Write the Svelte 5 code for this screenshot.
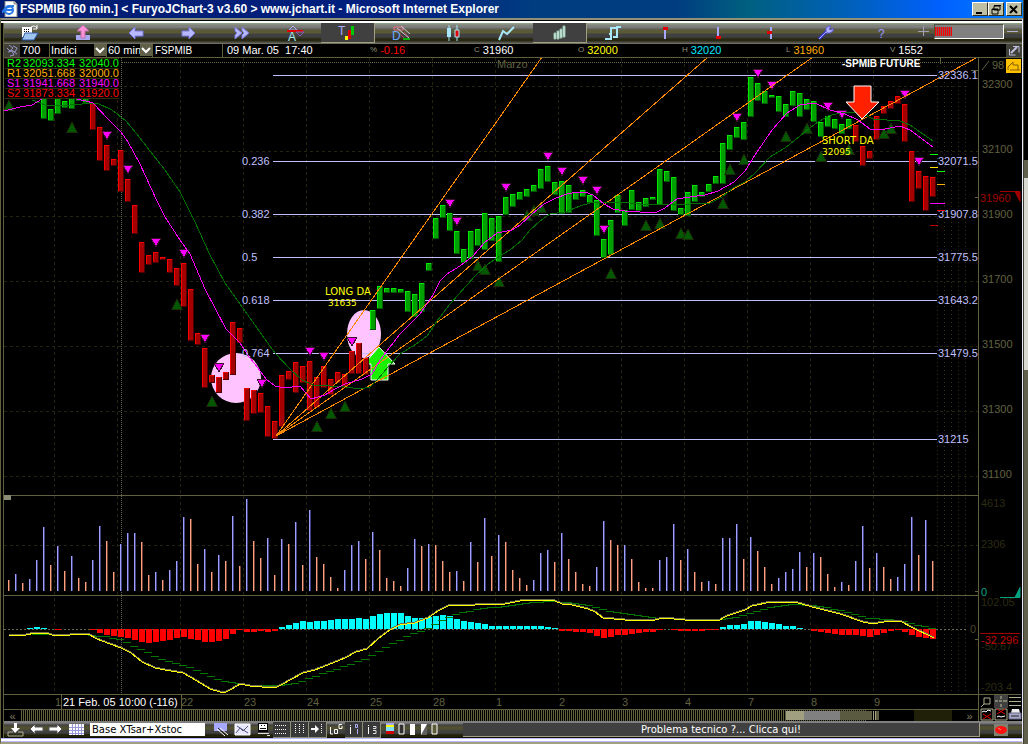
<script lang="ts">
  type Shape = { d?: string; fill?: string; stroke?: string; w?: number; t?: string; x?: number; y?: number }
  type Icon = { label: string; shapes: Shape[]; on?: boolean; size?: number }

  const LILAC = '#a8a8ff'
  const SKY = '#a8e8f8'

  const tools: Icon[] = [
    { label: 'Apri', shapes: [
      { d: 'M2 3h10v10H2z', fill: '#fff' },
      { d: 'M4 5h1v1H4zM6 5h1v1H6zM8 5h1v1H8zM4 7h1v1H4zM6 7h1v1H6zM8 7h1v1H8z', fill: '#000' },
      { d: 'M5 9h13l-4 7H2z', fill: '#9ec4f0', stroke: '#3058a8' },
      { d: 'M10 4q4-4 7 0M17 1v4h-4', stroke: '#fff' }
    ] },
    { label: 'Carica', shapes: [
      { d: 'M3 11h14v5H3z', fill: '#a8a8f0' },
      { d: 'M10 1l6 6h-4v7H8V7H4z', fill: '#ff90d8', stroke: '#b870a8' }
    ] },
    { label: 'Indietro', shapes: [{ d: 'M3 9l6-6v4h8v5H9v3z', fill: '#b8b8ff', stroke: '#7878e0' }] },
    { label: 'Avanti', shapes: [{ d: 'M16 9l-6-6v4H3v5h7v3z', fill: '#b8b8ff', stroke: '#7878e0' }] },
    { label: 'Fine', shapes: [{ d: 'M3 3l7 6-7 6V11l2-2-2-2zM10 3l7 6-7 6V11l2-2-2-2z', fill: '#b8b8ff', stroke: '#7878e0' }] },
    { label: 'Allarmi', shapes: [
      { d: 'M4 6l4-4 4 4z', stroke: LILAC },
      { d: 'M2 7h16', stroke: '#e00000', w: 2 },
      { d: 'M11 8h8l-4 4z', stroke: '#8858b8' },
      { t: 'A', x: 3, y: 17, fill: SKY }
    ] },
    { label: 'Testo', on: true, shapes: [
      { t: 'T', x: 1, y: 11, fill: LILAC },
      { d: 'M8 12h3v4H8z', fill: '#ff0' },
      { d: 'M11 6h3v9h-3z', fill: '#e00000' },
      { d: 'M14 2h3v9h-3z', fill: '#00c800' }
    ] },
    { label: 'Disegno', shapes: [
      { d: 'M3 3h9v3H3z', stroke: '#e87080' },
      { d: 'M6 4l12 10M10 2l9 8', stroke: '#c8c8d8' },
      { d: 'M8 9l5 5M13 8l5 5', stroke: '#b04060' },
      { d: 'M12 15h7', stroke: '#00b000', w: 2 },
      { t: 'D', x: 1, y: 16, fill: '#68a8ff' }
    ] },
    { label: 'Candele', shapes: [
      { d: 'M5 1v16M13 1v16', stroke: SKY },
      { d: 'M3 4h4v9H3z', fill: SKY },
      { d: 'M11 6h4v7h-4z', fill: '#e00000', stroke: SKY }
    ] },
    { label: 'Linea', shapes: [{ d: 'M2 16l4-9 4 3 7-7', stroke: SKY, w: 2 }] },
    { label: 'Barre', on: true, shapes: [
      { d: 'M4 9h2v6H4zM7 7h2v8H7zM10 5h2v9h-2zM13 2h2v11h-2z', fill: '#e0fff0', stroke: '#90b8a8' }
    ] },
    { label: 'Gradini', shapes: [{ d: 'M1 15h6v-5H5M7 10V4h5M9 13h4V8h-1M13 8V3h4', stroke: SKY, w: 2 }] },
    { label: 'Marca alto', shapes: [{ d: 'M9 5v10', stroke: LILAC, w: 2 }, { d: 'M7 3h5v3H7z', fill: '#e00000' }] },
    { label: 'Marca basso', shapes: [{ d: 'M9 3v9', stroke: LILAC, w: 2 }, { d: 'M7 12h5v3H7z', fill: '#e00000' }] },
    { label: 'Marca medio', shapes: [{ d: 'M9 3v12', stroke: LILAC, w: 2 }, { d: 'M5 7h5v3H5z', fill: '#e00000' }] },
    { label: 'Opzioni', shapes: [
      { d: 'M4 15l8-8', stroke: '#3838c8', w: 3 },
      { d: 'M4 15l8-8', stroke: '#b0b0ff' },
      { d: 'M11 8V4l3-2h2l-2 3 2 1 2-2v3l-3 2h-4', fill: '#b0b0ff', stroke: '#5858d0' }
    ] },
    { label: 'Aiuto', shapes: [{ t: '?', x: 10, y: 14, fill: '#9898ff' }] }
  ]

  const panelTools: Icon[] = [
    { label: 'Lente', shapes: [{ d: 'M4 3h6v6H4zM4 9l-3 3', stroke: '#b0b090' }] },
    { label: 'Mirino', on: true, shapes: [{ d: 'M7 1v3M7 5v2M7 9v3M1 6h3M5 6h1M9 6h4', stroke: '#c0c0a0' }] },
    { label: 'Righe', shapes: [{ d: 'M1 2.5h12M1 6.5h12M1 10.5h12', stroke: '#b0b090' }] },
    { label: 'Togli sotto', shapes: [{ d: 'M1 1h12v11H1z', stroke: '#b0b090' }, { d: 'M2 4l2-1 2 1 2-2 3 1', stroke: '#fff' }, { d: 'M3 6l8 5M11 6l-8 5', stroke: '#e00000' }] },
    { label: 'Togli sopra', shapes: [{ d: 'M1 1h12v11H1z', stroke: '#b0b090' }, { d: 'M3 1l8 5M11 1l-8 5', stroke: '#e00000' }, { d: 'M3 9l2-1 2 1 4-1', stroke: '#fff' }] },
    { label: 'Stampa', shapes: [{ d: 'M4 1h7l1 4H3z', fill: '#eee' }, { d: 'M1 5h12v6H1z', fill: '#a8a8c8', stroke: '#686888' }, { d: 'M3 8h8', stroke: '#222' }] }
  ]

  const bottomLeft: Icon[] = [
    { label: 'Salva', size: 22, shapes: [{ d: 'M7 1h3v5h3l-5 5-4-5h3z', fill: '#fff' }, { d: 'M1 10h5M11 10h5v4H1v-4', stroke: '#b0b090' }] },
    { label: 'Precedente', size: 20, shapes: [{ d: 'M2 7l5-5v3h8v4H7v3z', fill: '#fff', stroke: '#505050' }] },
    { label: 'Successivo', size: 19, shapes: [{ d: 'M15 7l-5-5v3H2v4h8v3z', fill: '#fff', stroke: '#505050' }] },
    { label: 'Griglia', size: 22, shapes: [{ d: 'M1 2h15v11H1z', fill: '#fff' }, { d: 'M1 5.5h15M1 8.5h15M1 11.5h15M4.5 2v11M7.5 2v11M10.5 2v11M13.5 2v11', stroke: '#9898d8' }] }
  ]
  const bottomMid: Icon[] = [
    { label: 'Modello', size: 22, shapes: [{ d: 'M2 1h13v8H2z', fill: '#a8a8ff' }, { d: 'M5 7l8 7M8 6l8 7', stroke: '#fff' }, { d: 'M6 6l8 7', stroke: '#222' }] },
    { label: 'Immagine', size: 22, shapes: [{ d: 'M1 2h15v11H1z', fill: '#e8e8ff', stroke: '#fff' }, { d: 'M2 11l4-5 3 3 5-5M3 4l11 7', stroke: '#555580' }] },
    { label: 'Monitor', size: 20, shapes: [{ d: 'M3 1h10v9H3z', fill: '#000' }, { d: 'M4 2h8v6H4z', fill: '#fff' }, { d: 'M6 3.5h1M9 3.5h1M5 6.5h6', stroke: '#111' }, { d: 'M3 11.5h11M12 13.5h3', stroke: '#ddd' }] },
    { label: 'Righe orizzontali', on: true, size: 18, shapes: [{ d: 'M2 3h1v1H2zM4 3h1v1H4zM6 3h1v1H6zM8 3h1v1H8zM10 3h1v1h-1zM12 3h1v1h-1zM2 7h1v1H2zM4 7h1v1H4zM6 7h1v1H6zM8 7h1v1H8zM10 7h1v1h-1zM12 7h1v1h-1zM2 11h1v1H2zM4 11h1v1H4zM6 11h1v1H6zM8 11h1v1H8zM10 11h1v1h-1zM12 11h1v1h-1z', fill: '#fff' }] },
    { label: 'Righe verticali', on: true, size: 18, shapes: [{ d: 'M4.5 2v1M4.5 4v1M4.5 6v1M4.5 8v1M4.5 10v1M8.5 2v1M8.5 4v1M8.5 6v1M8.5 8v1M8.5 10v1M12.5 2v1M12.5 4v1M12.5 6v1M12.5 8v1M12.5 10v1', stroke: '#fff' }] },
    { label: 'Sposta', on: true, size: 18, shapes: [{ d: 'M2 6h4V3l4 4-4 4V8H2z', fill: '#fff' }, { d: 'M12.5 2v1M12.5 4v1M12.5 6v1M12.5 8v1M12.5 10v1', stroke: '#fff' }] },
    { label: 'Log', size: 18, shapes: [{ d: 'M2.5 5v7H5M6.5 7.5h3v4h-3zM14 2.5h-3v4h3V4', stroke: '#fff' }] },
    { label: 'Info uno', on: true, size: 18, shapes: [{ d: 'M5.5 3v1M5.5 5v7', stroke: '#fff' }, { d: 'M10.5 2.5h2v3h-2zM12.5 7v5', stroke: '#b0b0ff' }] },
    { label: 'Info due', on: true, size: 18, shapes: [{ d: 'M5.5 3v1M5.5 5v7', stroke: '#fff' }, { d: 'M10 4.5h3v2h-3M10 8.5h3v3h-3', stroke: '#e0e0e0' }] },
    { label: 'Colori', size: 15, shapes: [{ d: 'M6 1h8v2H6z', fill: '#a8a8ff' }, { d: 'M6 3h8v2H6z', fill: '#ff0' }, { d: 'M6 5h8v4H6z', fill: '#7fdfff' }, { d: 'M6 9h8v3H6z', fill: '#d00000' }] },
    { label: 'Vuoto', size: 11, shapes: [{ d: 'M6 2h5v10H6z', fill: '#303030', stroke: '#fff' }] },
    { label: 'Pieno', size: 11, shapes: [{ d: 'M6 2h5v11H6z', fill: '#fff' }] },
    { label: 'Mezzo', size: 11, shapes: [{ d: 'M6 2h6v11H6z', fill: '#606060' }, { d: 'M6 2h6l-6 11z', fill: '#fff' }] },
    { label: 'Oliva', size: 11, shapes: [{ d: 'M6 2h5v10H6z', fill: '#5a5a38', stroke: '#fff' }] }
  ]

  const quotes = [
    ['%', '-0.16', 'red'],
    ['C', '31960', 'white'],
    ['O', '32000', 'yellow'],
    ['H', '32020', 'cyan'],
    ['L', '31960', 'orange'],
    ['V', '1552', 'white']
  ]

  const pivots = [
    ['R2', '32093.334', '32040.0', 'green'],
    ['R1', '32051.668', '32000.0', 'orange'],
    ['S1', '31941.668', '31940.0', 'magenta'],
    ['S2', '31873.334', '31920.0', 'red']
  ]

  const STEP = 7
  const barX = (i: number) => 6 + STEP * i

  // top and bottom of each bar, the first one sits on slot 5
  const FIRST = 5
  const candles = [
    [98, 119], [109, 121], [98, 114], [101, 108], [98, 109], [98, 101], [98, 103], [103, 130], [127, 161], [145, 171],
    [159, 166], [150, 192], [179, 202], [205, 234], [242, 273], [255, 265], [252, 263], [257, 260], [259, 273], [268, 286],
    [263, 307], [289, 341], [333, 345], [348, 388], [375, 383], [377, 393], [372, 380], [322, 375], [328, 343], [388, 421],
    [390, 414], [393, 413], [406, 437], [421, 439], [375, 427], [371, 380], [362, 393], [366, 383], [361, 411], [377, 408],
    [366, 388], [379, 395], [372, 383], [374, 388], [351, 374], [343, 374], [358, 375], [310, 330], [286, 309], [288, 293],
    [288, 293], [289, 293], [291, 312], [294, 317], [283, 312], [263, 271], [218, 239], [205, 218], [213, 231], [231, 254],
    [249, 263], [231, 259], [229, 246], [213, 250], [218, 241], [216, 262], [197, 215], [194, 207], [192, 200], [189, 197],
    [185, 192], [169, 189], [166, 182], [182, 195], [181, 214], [185, 213], [192, 200], [190, 197], [195, 203], [200, 236],
    [239, 258], [220, 255], [195, 213], [210, 226], [190, 210], [202, 211], [198, 207], [197, 200], [169, 205], [171, 182],
    [177, 211], [208, 215], [192, 216], [185, 202], [192, 197], [184, 192], [176, 184], [143, 184], [135, 150], [127, 138],
    [122, 140], [77, 117], [83, 101], [91, 104], [95, 98], [96, 112], [104, 117], [91, 106], [93, 117], [99, 110],
    [101, 122], [122, 137], [116, 127], [119, 129], [124, 134], [119, 129], [125, 142], [146, 166], [151, 159], [116, 140],
    [106, 114], [101, 109], [96, 104], [104, 142], [151, 202], [171, 189], [176, 211], [177, 197]
  ].map(([top, bottom], n) => {
    const i = n + FIRST
    return { x: barX(i), top, h: bottom - top, up: i < 12 || (i > 51 && i < 121) }
  })

  // negative values are the falling bars
  const volumes = [
    -11, 17, -8, 12, 31, 64, -26, 45, -20, 35, -13, -9, 31, 65, -50, -19, 47, 58, 58, -49,
    -16, 19, -11, 21, 30, 74, -72, -27, 42, -19, 36, -30, 75, -25, 92, -50, -33, 53, -16, 52,
    -47, 69, -26, 81, -34, -27, -14, -3, 21, 46, 50, -32, 59, -41, -13, -10, -5, 23, 52, -45,
    47, -46, -30, -19, 20, -10, 49, -29, 73, -35, 56, -49, -21, -13, -6, 11, 38, 41, -29, 58,
    -32, -19, -7, -5, 24, 70, -51, -46, 46, -32, -9, -3, -3, 31, 34, 67, -31, 42, -19, -9,
    10, -7, 53, 53, 67, -32, 54, -40, -24, -7, 13, 19, 22, 39, -24, 38, -34, -17, -4, 9,
    -6, 30, 65, -23, 38, -24, -12, 14, 27, 74, -36, 71, -30
  ]

  const histogram = [
    0, 0, 0, 1, 2, 1, 0, -1, 0, 0, 0, 0, -1, -4, -6, -7, -8, -9, -11, -13,
    -14, -13, -12, -11, -9, -8, -10, -11, -13, -13, -12, -10, -5, -1, -3, -3, -2, -3, -2, 2,
    4, 6, 8, 7, 8, 8, 9, 10, 10, 10, 11, 10, 13, 15, 16, 16, 16, 13, 11, 11,
    12, 13, 14, 13, 10, 8, 7, 6, 5, 3, 3, 3, 3, 3, 3, 3, 3, 2, 1, -2,
    -2, -3, -3, -4, -7, -9, -8, -6, -6, -5, -4, -3, -3, -1, 0, -1, -2, -2, -2, -2,
    -1, -1, 2, 4, 4, 5, 8, 8, 7, 6, 5, 3, 3, 1, 0, -2, -3, -4, -5, -6,
    -6, -6, -7, -8, -6, -4, -2, -1, -3, -6, -8, -9, -10
  ]

  const fastAvg = '4,111 20,107 32,105 42,99 72,98 86,101 93,103 108,119 121,132 128,142 140,164 157,201 165,217 180,240 190,254 205,289 215,308 226,329 240,343 250,358 258,368 266,379 275,386 285,388 300,386 311,399 325,395 333,390 345,384 362,379 372,374 380,360 400,334 420,314 433,295 440,281 447,274 460,266 473,256 484,243 497,233 512,230 520,225 532,214 544,204 556,198 567,194 577,192 585,192 593,195 604,204 613,209 625,211 655,213 665,208 677,199 690,197 705,195 718,191 734,182 745,171 755,155 772,130 787,113 800,105 815,103 830,110 845,114 858,120 870,129 880,130 900,126 910,130 933,147'
  const slowAvg = '32,100 45,105 70,105 82,104 97,103 112,110 126,121 136,133 150,151 165,170 180,192 195,222 210,255 225,283 240,304 262,335 275,353 290,369 302,380 313,385 330,386 345,387 360,389 370,387 378,379 388,367 400,354 416,344 427,336 437,321 450,304 475,276 488,264 500,256 510,250 522,240 530,230 540,221 550,214 565,212 580,206 590,203 620,202 640,204 690,204 710,203 722,197 733,188 745,182 755,173 770,157 785,148 800,136 815,124 828,116 840,113 860,112 873,119 900,121 910,125 933,141'
  const macd = '9,636 26,635 35,633 46,633 52,635 70,635 88,634 97,639 110,644 121,648 131,653 142,662 155,668 165,670 183,673 190,677 202,684 210,689 220,692 226,692 232,689 240,684 250,686 262,687 275,688 281,685 292,679 303,673 315,670 328,665 345,658 356,652 367,649 378,639 390,630 400,625 415,623 428,618 438,611 450,605 465,606 485,604 505,604 520,601 545,600 555,601 562,604 572,605 588,609 595,612 603,618 625,620 655,620 663,618 685,620 718,621 727,616 745,610 752,606 771,602 798,603 816,608 840,614 863,622 873,624 884,622 900,621 913,628 934,638'

  const signalPoints = [
    [35, 634], [80, 634], [95, 635], [110, 637], [121, 639], [131, 644], [145, 651], [160, 658], [180, 664], [195, 669],
    [215, 678], [225, 681], [240, 683], [250, 685], [275, 685], [290, 684], [304, 680], [320, 674], [345, 666], [362, 660],
    [376, 653], [390, 645], [405, 637], [420, 631], [432, 626], [445, 618], [460, 613], [480, 608], [505, 606], [525, 603],
    [550, 601], [570, 602], [585, 604], [600, 608], [615, 612], [635, 615], [660, 618], [690, 619], [720, 619], [735, 617],
    [750, 613], [770, 607], [795, 604], [815, 605], [830, 608], [850, 612], [870, 618], [900, 620], [915, 624], [934, 628]
  ]

  function signalAt(x: number) {
    const k = signalPoints.findIndex((p) => p[0] >= x)
    const [x1, y1] = signalPoints[k]
    const [x0, y0] = signalPoints[Math.max(0, k - 1)]
    return Math.round(x1 === x0 ? y1 : y0 + ((y1 - y0) * (x - x0)) / (x1 - x0))
  }

  const signal = volumes
    .map((_, i) => 8 + STEP * i)
    .filter((x) => x >= 36)
    .map((x) => `M${x - 4} ${signalAt(x)}h8`)
    .join('')

  const sellMarks = [
    [107, 131], [128, 165], [156, 238], [184, 249], [205, 334], [219, 363], [262, 379], [310, 347], [324, 352], [352, 337],
    [450, 199], [457, 217], [506, 183], [548, 152], [562, 167], [583, 176], [597, 186], [604, 225], [737, 113], [758, 69],
    [772, 81], [828, 102], [842, 110], [905, 90], [919, 157]
  ]
  const buyMarks = [
    [9, 100], [72, 122], [177, 299], [212, 396], [317, 421], [331, 408], [345, 401], [478, 260], [485, 264], [499, 276],
    [527, 210], [534, 205], [541, 202], [611, 268], [646, 220], [660, 218], [681, 228], [688, 229], [723, 198], [730, 164],
    [744, 154], [786, 131], [807, 123], [821, 151], [849, 144], [884, 128], [891, 123]
  ]

  const fibs = [
    [75, '', '32336.1'], [161, '0.236', '32071.5'], [214, '0.382', '31907.8'], [257, '0.5', '31775.5'],
    [300, '0.618', '31643.2'], [353, '0.764', '31479.5'], [439, '', '31215']
  ] as [number, string, string][]

  const fan = [[542, 57], [708, 57], [813, 57], [978, 57]]
  const scale = [32300, 32100, 31900, 31700, 31500, 31300, 31100]
  const gridX = Array.from({ length: 14 }, (_, n) => 54 + 63 * n)
  const futureX = [937, 944, 951, 958, 965]
  const days = ['1', '', '22', '23', '24', '25', '28', '1', '2', '3', '4', '7', '8', '9']

  const levels = [
    [930, 8, 154, '#00ff00'], [930, 8, 167, '#ffe000'], [937, 8, 171, '#00ff00'], [937, 8, 184, '#ffb000'],
    [930, 15, 203, '#ff00ff'], [937, 8, 210, '#ff0000'], [930, 8, 225, '#c00000']
  ] as [number, number, number, string][]

  let group = $state('Indici')
  let frame = $state('60 min')
  let template = $state('Base XTsar+Xstoc')
</script>

{#snippet glyph(shapes: Shape[], w: number, h: number)}
  <svg width={w} height={h} viewBox="0 0 {w} {h}" aria-hidden="true">
    {#each shapes as s}
      {#if s.t}
        <text class="glyph-text" x={s.x} y={s.y} fill={s.fill}>{s.t}</text>
      {:else}
        <path d={s.d} fill={s.fill ?? 'none'} stroke={s.stroke ?? 'none'} stroke-width={s.w ?? 1} />
      {/if}
    {/each}
  </svg>
{/snippet}

<div class="desktop">
  <main class="window">
    <header class="title">
      <svg width="16" height="16" viewBox="0 0 16 16" aria-hidden="true">
        <path d="M3 0h9l3 3v13H3z" fill="#fff" stroke="#888" />
        <path d="M12 0v3h3" fill="#ccc" stroke="#888" />
        <circle cx="7" cy="9" r="4" fill="none" stroke="#2878e8" stroke-width="2" />
        <path d="M4 9h7M0 12q3-7 12-7" fill="none" stroke="#2878e8" stroke-width="2" />
      </svg>
      <h1>FSPMIB [60 min.] &lt; FuryoJChart-3 v3.60 &gt; www.jchart.it - Microsoft Internet Explorer</h1>
      <button aria-label="Riduci a icona">{@render glyph([{ d: 'M2 8h6v2H2z', fill: '#000' }], 12, 11)}</button>
      <button aria-label="Ripristina">{@render glyph([{ d: 'M4 2h6v4H4zM2 5h6v5H2z', fill: '#bfbfa3', stroke: '#000' }, { d: 'M4 1h7v1H4zM2 5h6v1H2z', fill: '#000' }], 12, 11)}</button>
      <button class="close" aria-label="Chiudi">{@render glyph([{ d: 'M2 2l7 7M9 2L2 9', stroke: '#000', w: 2 }], 12, 11)}</button>
    </header>

    <div class="content">
      <nav class="toolbar">
        {#each tools as tool}
          <button class="tool" class:on={tool.on} aria-label={tool.label}>
            {@render glyph(tool.shapes, 20, 18)}
          </button>
        {/each}
        <button class="zoom" aria-label="Aumenta">{@render glyph([{ d: 'M7.5 2v10M2 7.5h11', stroke: '#a0a0b8' }], 14, 18)}</button>
        <input class="width" type="range" min="0" max="100" value="0" aria-label="Larghezza barre">
        <button class="zoom minus" aria-label="Riduci">{@render glyph([{ d: 'M1 7.5h11', stroke: '#b0b0d8' }], 14, 18)}</button>
      </nav>

      <div class="info">
        <button class="link" aria-label="Collega">
          {@render glyph([{ d: 'M4 1l4 3-3 3-3-3M8 2l4 2-2 4-4-2M3 8l4-1 2 4-4 1M9 8l3 2', stroke: '#9898c8' }], 15, 13)}
        </button>
        <span class="cell code">700</span>
        <span class="pick group">
          <select aria-label="Gruppo" bind:value={group}><option>Indici</option></select>
          <svg width="12" height="12" viewBox="0 0 12 12" aria-hidden="true"><path d="M0 0h12v12H0z" fill="#606048" /><path d="M2 4l4 4 4-4" fill="none" stroke="#fff" stroke-width="2" /></svg>
        </span>
        <span class="pick period">
          <select aria-label="Periodo" bind:value={frame}><option>60 min</option></select>
          <svg width="12" height="12" viewBox="0 0 12 12" aria-hidden="true"><path d="M0 0h12v12H0z" fill="#606048" /><path d="M2 4l4 4 4-4" fill="none" stroke="#fff" stroke-width="2" /></svg>
        </span>
        <span class="cell symbol">FSPMIB</span>
        <span class="date">09 Mar. 05 &nbsp;17:40</span>
        <div class="quotes">
          {#each quotes as [key, value, tone]}
            <span class="quote {tone}"><i>{key}</i>{value}</span>
          {/each}
        </div>
        <button class="link" aria-label="Ingrandisci">
          {@render glyph([{ d: 'M4 9l6-6M6 2.5h6v6M2.5 5v6h6', stroke: '#c0c0e0' }, { d: 'M4 9l6-6', stroke: '#c0c0e0', w: 2 }], 15, 13)}
        </button>
      </div>

      <section class="charts">
        <svg class="plot" viewBox="4 58 1018 637" role="img" aria-label="FSPMIB 60 min.">
          <g class="crisp">
            <g class="grid">
              {#each scale as _, n}
                <path d="M4 {86.5 + 65 * n}H{n ? 978 : 970}" />
              {/each}
              <path d="M4 545.5H978" />
              {#each gridX as x}
                <path d="M{x + 0.5} 58V692" />
              {/each}
              {#each futureX as x}
                <path class="dots" d="M{x + 0.5} 66V692" />
              {/each}
            </g>
            <path class="dotted" d="M122 62.5H970M121.5 58V695" />
            <path class="zero" d="M4 629.5H968" />
            <path class="rule" d="M4 495.5H978M4 595.5H978M4 694.5H1021M978.5 58V695M940.5 58v6M971 70.5h7M975 197.5h3M975 591.5h3M975 639.5h3" />
            <path d="M4 495h7v5H4z" fill="#8c8c74" />
          </g>

          <text class="month" x="497" y="68">Marzo</text>

          <ellipse cx="236" cy="378" rx="25" ry="25" fill="#ffc4ff" />
          <ellipse cx="364" cy="334" rx="17" ry="24" fill="#ffc4ff" />

          <g class="crisp fib">
            {#each fibs as [y]}
              <path d="M273 {y + 0.5}H937" />
            {/each}
          </g>

          <path class="arrow" d="M379 347l16 17h-7v16h-17v-16h-7z" fill="#18f000" />

          <g class="crisp">
            {#each candles as c}
              <rect x={c.x} y={c.top} width="6" height={c.h} fill={c.up ? '#005800' : '#500000'} />
              <rect x={c.x} y={c.top} width="5" height={c.h - 1} fill={c.up ? '#00e800' : '#ff0000'} />
              <rect x={c.x + 1} y={c.top + 1} width="4" height={Math.max(0, c.h - 2)} fill={c.up ? '#00a000' : '#a40000'} />
            {/each}
          </g>

          <g class="crisp marks">
            {#each buyMarks as [x, y]}
              <path class="buy" d="M{x} {y}l5 10h-10z" />
            {/each}
            {#each sellMarks as [x, y]}
              <path class="sell" d="M{x - 5} {y}h10l-5 9z" />
            {/each}
          </g>

          <g class="crisp lines">
            {#each fan as [x, y]}
              <path d="M276 436L{x} {y}" stroke="#ff8800" />
            {/each}
            <polyline points={slowAvg} stroke="#007000" />
            <polyline points={fastAvg} stroke="#ff00ff" />
          </g>

          <path class="arrow" d="M854 86h17v16h8l-17 17-16-17h8z" fill="#ff2000" />

          <g class="fib-text">
            {#each fibs as [y, ratio, price]}
              <text x="242" y={y + 4}>{ratio}</text>
              <text x="938" y={y + 4}>{price}</text>
            {/each}
          </g>

          <g class="note">
            <text x="325" y="295">LONG DA</text>
            <text class="num" x="328" y="306">31635</text>
            <text x="822" y="144">SHORT DA</text>
            <text class="num" x="822" y="155">32095</text>
          </g>
          <text class="future" x="842" y="67">-SPMIB FUTURE</text>

          <g class="crisp">
            {#each levels as [x, w, y, color]}
              <rect {x} {y} width={w} height="1" fill={color} />
            {/each}
            {#each volumes as v, i}
              <rect x={8 + STEP * i} y={591 - Math.abs(v)} width="2" height={Math.abs(v)} fill={v > 0 ? '#404080' : '#704030'} />
              <rect x={8 + STEP * i} y={591 - Math.abs(v)} width="1" height={Math.abs(v)} fill={v > 0 ? '#a0a0ff' : '#ffa080'} />
            {/each}
            {#each histogram as v, i}
              <rect x={barX(i)} y={v > 0 ? 629 - v : 629} width="6" height={Math.abs(v)} fill={v > 0 ? '#00ffff' : '#ff0000'} />
            {/each}
          </g>
          <g class="crisp lines">
            <path d={signal} stroke="#007800" />
            <polyline points={macd} stroke="#70704c" transform="translate(0 -1)" />
            <polyline points={macd} stroke="#ffff00" />
          </g>

          <g class="scale">
            {#each scale as price, n}
              <text x="982" y={88 + 65 * n}>{price}</text>
            {/each}
            <text x="992" y="69">98</text>
            <path d="M982 70l7-9" stroke="#606040" />
          </g>
          <g class="faint">
            <text x="981" y="507">4613</text>
            <text x="981" y="548">2306</text>
            <text x="981" y="606">102.05</text>
            <text x="981" y="650">-50.67</text>
            <text x="981" y="691">-203.4</text>
            <text class="origin" x="970" y="633">0</text>
          </g>
          <text x="980" y="202" fill="#a00000">31960</text>
          <path d="M1000 191.5h20v10l-5-10" fill="#a00000" stroke="#a00000" />
          <text x="981" y="596" fill="#00a080">0</text>
          <path d="M1000 597.5h20v-10l-5 10" fill="#00a080" stroke="#00a080" />
          <path class="crisp" d="M980 633.5h40" stroke="#a00000" />
          <text x="981" y="644" fill="#c00000">-32.296</text>
          <g>
            <rect x="1006" y="59" width="15" height="14" fill="#ffc000" />
            <path d="M1008 70v-3l5-5v3h5v5M1010 70h10" fill="none" stroke="#806000" />
          </g>
        </svg>

        <table class="pivots">
          <tbody>
            {#each pivots as [name, level, rounded, tone]}
              <tr class={tone}><th scope="row">{name}</th><td>{level}</td><td>{rounded}</td></tr>
            {/each}
          </tbody>
        </table>
      </section>

      <div class="foot">
        <div class="timeline">
          <svg class="axis" viewBox="4 695 974 14" aria-hidden="true">
            {#each days as day, n}
              <text x={55 + 63 * n} y="706">{day}</text>
            {/each}
            <path class="crisp" d="M61.5 695v14M181.5 695v14" stroke="#60603c" />
            <rect x="62" y="695" width="119" height="14" />
            <text class="cursor" x="63" y="706">21 Feb. 05 10:00 (-116)</text>
          </svg>
          <div class="scroll">
            <button aria-label="Inizio">«</button>
            <input type="range" min="0" max="1000" value="903" aria-label="Posizione">
            <button aria-label="Ultimo">»</button>
          </div>
        </div>
        <div class="panel">
          {#each panelTools as tool}
            <button class:on={tool.on} aria-label={tool.label}>{@render glyph(tool.shapes, 14, 13)}</button>
          {/each}
        </div>
      </div>

      <footer class="status">
        {#each bottomLeft as tool}
          <button style:width="{tool.size}px" aria-label={tool.label}>{@render glyph(tool.shapes, 17, 15)}</button>
        {/each}
        <input class="template" type="text" aria-label="Modello" bind:value={template}>
        {#each bottomMid as tool}
          <button class:on={tool.on} style:width="{tool.size}px" aria-label={tool.label}>{@render glyph(tool.shapes, 17, 15)}</button>
        {/each}
        <a class="message" href="#aiuto">Problema tecnico ?... Clicca qui!</a>
        <button class="led" aria-label="Connessione">
          <svg width="14" height="12" viewBox="0 0 14 12" aria-hidden="true"><path d="M0 0h14v12H0z" fill="#808070" /><ellipse cx="7" cy="6" rx="6" ry="4" fill="#ff1010" /><path d="M4 4l3 2" stroke="#ff9070" /></svg>
        </button>
      </footer>
    </div>
  </main>
  <aside class="behind"></aside>
</div>

<style>
  :global(body) {
    background: #000;
  }

  .desktop {
    display: grid;
    grid-template-columns: minmax(0, 1fr) 5px;
    font: 11px/13px "Liberation Sans", Arial, sans-serif;
    color: #fff;
  }

  .behind {
    border-left: 1px solid #404030;
    background: linear-gradient(#000 160px, #60604c 160px, #60604c 178px, #d8d8d0 178px, #d8d8d0 370px, #60604c 370px);
  }

  button {
    display: flex;
    align-items: center;
    justify-content: center;
    flex: none;
    margin: 0;
    padding: 0;
    border: 0;
    background: none;
    color: inherit;
    font: inherit;
    cursor: pointer;
  }

  svg {
    display: block;
    flex: none;
  }

  svg text {
    font: 11px "Liberation Sans", Arial, sans-serif;
  }

  svg .glyph-text {
    font-size: 12px;
  }

  .crisp {
    shape-rendering: crispEdges;
  }

  .title {
    display: flex;
    align-items: center;
    height: 18px;
    padding: 0 1px 0 2px;
    background: linear-gradient(90deg, #001c70, #002080 40%, #003c80 52%, #003c80 66%, #006080 73%, #0060c0 84%, #0060ff 92%, #0080ff);
  }

  .title h1 {
    flex: 1;
    min-width: 0;
    margin: 0 0 0 2px;
    overflow: hidden;
    font-size: 12px;
    line-height: 18px;
    white-space: nowrap;
  }

  .title button {
    width: 16px;
    height: 14px;
    box-sizing: border-box;
    border: 1px solid;
    border-color: #fff #303020 #303020 #fff;
    background: #bfbfa3;
  }

  .title .close {
    margin-left: 2px;
  }

  .content {
    padding: 3px 0 4px 3px;
    border: 1px solid #60603c;
    border-top: 2px solid #909078;
    border-right-color: #e8e8ff;
    border-bottom: 2px solid #a0a080;
    background:
      linear-gradient(#000 0 1px, #fff 1px 3px, transparent 3px),
      linear-gradient(0deg, #b8b8ff 0 1px, #fff 1px 3px, #b8b8ff 3px 4px, transparent 4px),
      linear-gradient(90deg, #000 2px, #60603c 2px 3px, #000 3px);
  }

  .toolbar {
    display: flex;
    height: 20px;
    padding-right: 1px;
    background: linear-gradient(#90a088 0 1px, #80807c 2px 4px, #60605c 6px, #5a5a38 7px 10px, #404040 11px 14px, #282810 16px 18px, #50504c 19px);
  }

  .tool {
    flex: 53 1 0;
    box-sizing: border-box;
  }

  .tool.on {
    border-right: 1px solid #a0a080;
    border-bottom: 1px solid #a0a080;
    background: #404040;
  }

  .zoom {
    width: 26px;
    justify-content: flex-end;
  }

  .zoom.minus {
    width: 17px;
    justify-content: center;
  }

  input[type='range'] {
    appearance: none;
    margin: 0;
    min-width: 0;
    border-radius: 0;
  }

  .toolbar .width {
    width: 70px;
    height: 15px;
    margin: 1px 0 0 4px;
    box-sizing: border-box;
    border: 1px solid;
    border-color: #505040 #fff #fff #505040;
    background: #808080;
  }

  .width::-webkit-slider-thumb {
    appearance: none;
    width: 17px;
    height: 9px;
    border-radius: 0;
    background: repeating-linear-gradient(90deg, #f00 0 1px, #905050 1px 2px);
  }

  .info {
    display: flex;
    align-items: center;
    height: 15px;
    box-sizing: border-box;
    border-top: 1px solid #70705c;
    border-bottom: 1px solid #60603c;
    background: #000;
  }

  .link {
    width: 16px;
    height: 13px;
    background: #404038;
  }

  .cell,
  .pick {
    box-sizing: border-box;
    height: 13px;
    border-right: 1px solid #60603c;
  }

  .cell {
    padding-left: 2px;
  }

  .code {
    width: 30px;
  }

  .symbol {
    width: 70px;
    font-size: 10px;
  }

  .pick {
    position: relative;
  }

  .pick svg {
    position: absolute;
    top: 0;
    right: 0;
    pointer-events: none;
  }

  .pick select {
    appearance: none;
    width: 100%;
    height: 13px;
    padding: 0 0 0 1px;
    border: 0;
    border-radius: 0;
    background: #000;
    color: #fff;
    font: inherit;
    line-height: 13px;
  }

  .group {
    width: 57px;
  }

  .period {
    width: 46px;
  }

  .date {
    width: 143px;
    padding-left: 4px;
    box-sizing: border-box;
  }

  .quotes {
    flex: 1;
    display: grid;
    grid-template-columns: repeat(6, 1fr);
    padding: 0 12px 0 4px;
  }

  .quote i {
    margin-right: 3px;
    color: #909078;
    font-size: 8px;
    font-style: normal;
    line-height: 1;
    vertical-align: 2px;
  }

  .red {
    color: #ff0000;
  }

  .yellow {
    color: #ffff00;
  }

  .cyan {
    color: #00e8ff;
  }

  .orange {
    color: #ffb000;
  }

  .green {
    color: #00ff00;
  }

  .magenta {
    color: #ff00ff;
  }

  .charts {
    position: relative;
    background: #000;
  }

  .plot,
  .axis {
    width: 100%;
    height: auto;
  }

  .grid path {
    stroke: #24240c;
    stroke-dasharray: 3 3;
  }

  .grid .dots {
    stroke-dasharray: 1 3;
    stroke: #34341c;
  }

  .dotted {
    stroke: #68684c;
    stroke-dasharray: 1 1;
  }

  .zero {
    stroke: #68684c;
    stroke-dasharray: 2 2;
  }

  .rule {
    fill: none;
    stroke: #60603c;
  }

  .month,
  .scale text {
    fill: #606040;
  }

  .faint text {
    fill: #2c2c10;
  }

  .faint .origin {
    fill: #484828;
  }

  .fib path {
    stroke: #c0c0ff;
  }

  .fib-text text {
    fill: #c0c0ff;
  }

  .arrow {
    stroke: #fff;
  }

  .marks .buy {
    fill: #005800;
    stroke: #1c2c08;
  }

  .marks .sell {
    fill: #ff00ff;
    stroke: #401030;
  }

  .lines path,
  .lines polyline {
    fill: none;
  }

  .note text {
    fill: #ffff00;
    font-family: "DejaVu Sans", Verdana, sans-serif;
    font-size: 10px;
  }

  .note .num {
    font-size: 9px;
  }

  .plot .future {
    fill: #fff;
    font-size: 10px;
    font-weight: bold;
  }

  .pivots {
    position: absolute;
    top: 0;
    left: 1px;
    border-collapse: collapse;
    background: #000;
    line-height: 9px;
  }

  .pivots th,
  .pivots td {
    padding: 0 0 0 2px;
    border-top: 1px solid #2c2c10;
    border-bottom: 1px solid #2c2c10;
    font-weight: normal;
    text-align: left;
  }

  .pivots td + td {
    padding-left: 4px;
  }

  .foot {
    display: grid;
    grid-template-columns: minmax(0, 1fr) 43px;
    height: 26px;
    background: #000;
  }

  .timeline {
    border-right: 1px solid #60603c;
  }

  .axis text {
    fill: #606040;
  }

  .axis .cursor {
    fill: #fff;
  }

  .scroll {
    display: flex;
    height: 12px;
    box-sizing: border-box;
    border-top: 1px solid #60603c;
  }

  .scroll button {
    width: 17px;
    color: #808060;
    line-height: 10px;
  }

  .scroll input {
    flex: 1;
    height: 11px;
    background:
      linear-gradient(90deg, transparent 90%, #000 90% 95%, #202008 95% 99%, #000 99%),
      repeating-linear-gradient(90deg, #60603c 0 1px, #000 1px 2px);
  }

  .scroll input::-webkit-slider-thumb {
    appearance: none;
    width: 93px;
    height: 9px;
    border-radius: 0;
    background: linear-gradient(90deg, #a0a080 18px, #808080 18px 54px, #5a5a40 54px 86px, #000 86px 87px, #a0a080 87px 88px, #000 88px 89px, #a0a080 89px 90px, #5a5a40 90px);
  }

  .panel {
    display: grid;
    grid-template-columns: repeat(3, 14px);
    grid-template-rows: 13px 13px;
    padding-left: 1px;
  }

  .panel .on {
    background: #404040;
  }

  .status {
    display: flex;
    align-items: center;
    height: 17px;
    background: linear-gradient(#808080 0 2px, #404040 4px, #505030 6px 8px, #404040 10px 12px, #202008 14px 16px, #000 17px);
  }

  .status button {
    height: 16px;
    overflow: hidden;
  }

  .status .on {
    box-sizing: border-box;
    border-right: 1px solid #909078;
    border-bottom: 1px solid #909078;
    background: #383838;
  }

  .template {
    width: 115px;
    height: 13px;
    box-sizing: border-box;
    margin: 0 4px 0 3px;
    padding: 0 2px;
    border: 0;
    background: #fff;
    color: #000;
    font: 10px "DejaVu Sans", Verdana, sans-serif;
  }

  .message {
    flex: 1;
    margin-left: 23px;
    border-right: 1px solid #a0a080;
    border-bottom: 1px solid #a0a080;
    background: #404040;
    color: #fff;
    font: 10px/13px "DejaVu Sans", Verdana, sans-serif;
    text-align: center;
    text-decoration: none;
  }

  .status .led {
    width: 42px;
  }
</style>
